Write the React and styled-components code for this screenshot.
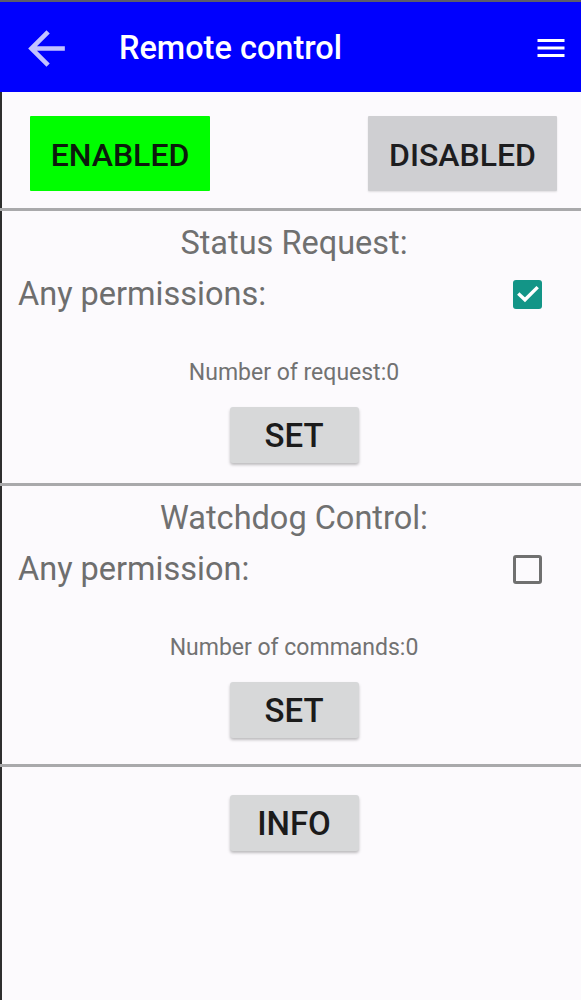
import React from "react";
import styled, { createGlobalStyle } from "styled-components";

const GlobalStyle = createGlobalStyle`
  html, body {
    margin: 0;
    padding: 0;
    background: #fcfafd;
  }
  body {
    font-family: Roboto, "Noto Sans", "Liberation Sans", sans-serif;
  }
  * {
    box-sizing: border-box;
  }
`;

function ArrowBack() {
  return (
    <svg width="55" height="55" viewBox="0 0 24 24" fill="#c2c2ff">
      <path d="M20 11H7.83l5.59-5.59L12 4l-8 8 8 8 1.41-1.41L7.83 13H20v-2z" />
    </svg>
  );
}

function MenuIcon() {
  return (
    <svg width="36" height="36" viewBox="0 0 24 24" fill="#ffffff">
      <path d="M3 18h18v-2H3v2zm0-5h18v-2H3v2zm0-7v2h18V6H3z" />
    </svg>
  );
}

function Check({ checked }) {
  return (
    <CheckBox checked={checked}>
      {checked && (
        <svg width="26" height="26" viewBox="0 0 24 24" fill="none">
          <path
            d="M4.2 12.6l5 4.8L19.8 6.8"
            stroke="#ffffff"
            strokeWidth="3.2"
            strokeLinecap="square"
          />
        </svg>
      )}
    </CheckBox>
  );
}

export default function App() {
  return (
    <Page>
      <GlobalStyle />
      <Toolbar>
        <IconSlot>
          <ArrowBack />
        </IconSlot>
        <Title>Remote control</Title>
        <IconSlot>
          <MenuIcon />
        </IconSlot>
      </Toolbar>

      <Content>
        <ModeRow>
          <ModeButton active>ENABLED</ModeButton>
          <ModeButton>DISABLED</ModeButton>
        </ModeRow>
        <Divider />

        {/* status request */}
        <Section bottom={20}>
          <Heading>Status Request:</Heading>
          <OptionRow>
            <Label>Any permissions:</Label>
            <Check checked />
          </OptionRow>
          <Count>Number of request:0</Count>
          <ActionButton>SET</ActionButton>
        </Section>
        <Divider />

        {/* watchdog */}
        <Section bottom={26}>
          <Heading>Watchdog Control:</Heading>
          <OptionRow>
            <Label>Any permission:</Label>
            <Check />
          </OptionRow>
          <Count>Number of commands:0</Count>
          <ActionButton>SET</ActionButton>
        </Section>
        <Divider />

        <Section bottom={0} top={28}>
          <ActionButton>INFO</ActionButton>
        </Section>
      </Content>
    </Page>
  );
}

const Page = styled.div`
  min-height: 1000px;
  border-top: 2px solid #5c5c6c;
  background: #fcfafd;
  display: flex;
  flex-direction: column;
`;

const Toolbar = styled.header`
  height: 90px;
  background: #0000fe;
  display: flex;
  align-items: center;
  padding: 2px 12px 0 19px;
`;

const IconSlot = styled.div`
  display: flex;
  align-items: center;
`;

const Title = styled.h1`
  flex: 1;
  margin: 0 0 0 45px;
  color: #ffffff;
  font-size: 32.5px;
  font-weight: 500;
  line-height: 40px;
`;

const Content = styled.main`
  flex: 1;
  box-shadow: inset 2px 0 0 #2e2e2e;
`;

const ModeRow = styled.div`
  display: flex;
  justify-content: space-between;
  align-items: flex-start;
  padding: 24px 24px 17px 30px;
`;

const ModeButton = styled.div`
  width: ${(p) => (p.active ? "180px" : "189px")};
  height: 75px;
  padding-top: 3px;
  display: flex;
  align-items: center;
  justify-content: center;
  background: ${(p) => (p.active ? "#00fe00" : "#cfcfd2")};
  color: ${(p) => (p.active ? "#0c1a0c" : "#1d1d1f")};
  font-size: 32px;
  font-weight: 500;
  border-radius: 1px;
  box-shadow: ${(p) => (p.active ? "none" : "0 1px 2px rgba(0,0,0,0.12)")};
`;

const Divider = styled.hr`
  margin: 0;
  border: none;
  height: 3px;
  background: #a9a9ab;
`;

const Section = styled.section`
  display: flex;
  flex-direction: column;
  align-items: center;
  padding: ${(p) => p.top ?? 13}px 0 ${(p) => p.bottom}px 7px;
  min-height: ${(p) => (p.top ? "180px" : "auto")};
`;

const Heading = styled.h2`
  margin: 0;
  font-size: 32.5px;
  font-weight: 400;
  line-height: 38px;
  color: #707070;
`;

const OptionRow = styled.div`
  align-self: stretch;
  display: flex;
  align-items: center;
  justify-content: space-between;
  margin-top: 13px;
  padding: 0 39px 0 11px;
  height: 38px;
`;

const Label = styled.span`
  font-size: 32.5px;
  line-height: 38px;
  color: #6e6e6e;
`;

const CheckBox = styled.span`
  width: 29px;
  height: 29px;
  border-radius: 3px;
  display: flex;
  align-items: center;
  justify-content: center;
  background: ${(p) => (p.checked ? "#139587" : "transparent")};
  border: ${(p) => (p.checked ? "none" : "3px solid #707070")};
`;

const Count = styled.div`
  margin-top: 46px;
  font-size: 23px;
  line-height: 28px;
  color: #727272;
`;

const ActionButton = styled.div`
  margin-top: 20px;
  width: 129px;
  height: 56px;
  display: flex;
  align-items: center;
  justify-content: center;
  background: #d7d8d9;
  border-radius: 3px;
  box-shadow: 0 2px 3px rgba(0, 0, 0, 0.25);
  color: #1b1b1b;
  font-size: 33px;
  font-weight: 500;

  &:first-child {
    margin-top: 0;
  }
`;
